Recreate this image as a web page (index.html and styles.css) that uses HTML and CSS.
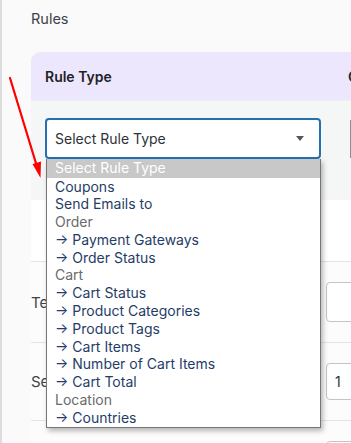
FILE: index.html
```html
<!DOCTYPE html>
<html>
<head>
<meta charset="utf-8">
<link rel="stylesheet" href="styles.css">
</head>
<body>
<div class="page">
  <h2 class="title">Rules</h2>
  <div class="card">
    <div class="card-head">
      <div class="col1">Rule Type</div>
      <div class="col2">Conditions</div>
    </div>
    <div class="card-body">
      <div class="col1">
        <div class="select">
          <span>Select Rule Type</span>
          <span class="caret"></span>
        </div>
      </div>
      <div class="col2">
        <div class="select2"></div>
      </div>
    </div>
    <div class="card-foot"></div>
  </div>
  <div class="rows">
    <div class="row r1">
      <span class="label">Test Mode</span>
      <div class="input"></div>
    </div>
    <div class="row r2">
      <span class="label">Sequence</span>
      <div class="input small">1</div>
    </div>
    <div class="row r3">
      <div class="input"></div>
    </div>
  </div>

  <ul class="dropdown">
    <li class="opt sel">Select Rule Type</li>
    <li class="opt">Coupons</li>
    <li class="opt">Send Emails to</li>
    <li class="grp">Order</li>
    <li class="opt">→ Payment Gateways</li>
    <li class="opt">→ Order Status</li>
    <li class="grp">Cart</li>
    <li class="opt">→ Cart Status</li>
    <li class="opt">→ Product Categories</li>
    <li class="opt">→ Product Tags</li>
    <li class="opt">→ Cart Items</li>
    <li class="opt">→ Number of Cart Items</li>
    <li class="opt">→ Cart Total</li>
    <li class="grp">Location</li>
    <li class="opt">→ Countries</li>
  </ul>

  <svg class="pointer" width="351" height="443" viewBox="0 0 351 443">
    <line x1="10" y1="78" x2="36.5" y2="165" stroke="#ff0000" stroke-width="2.2" stroke-linecap="round"/>
    <polygon points="40.5,178 32.5,164 41,161.5" fill="#ff0000"/>
  </svg>
</div>
</body>
</html>
```

FILE: styles.css
```css
html, body {
  margin: 0;
  padding: 0;
}
body {
  width: 351px;
  height: 443px;
  overflow: hidden;
  background: #fafafa;
  font-family: Inter, "Noto Sans", sans-serif;
  color: #1d2327;
}
.page {
  position: relative;
  height: 443px;
  overflow: hidden;
  border-left: 2px solid #dcdcde;
  padding-left: 29px;
  box-sizing: border-box;
}
.title {
  margin: 0;
  padding-top: 10px;
  height: 52px;
  box-sizing: border-box;
  font-size: 14.5px;
  font-weight: 400;
  line-height: 18px;
  color: #3c434a;
}
.card {
  width: 400px;
}
.card-head {
  display: grid;
  grid-template-columns: 317px 1fr;
  height: 48px;
  align-items: center;
  background: #ede7fd;
  border-top-left-radius: 9px;
  font-size: 14px;
  font-weight: 600;
  color: #1d2327;
}
.card-head .col1 {
  padding-left: 14px;
}
.card-body {
  display: grid;
  grid-template-columns: 317px 1fr;
  height: 100px;
  background: #f5f6f6;
  border-top: 1px solid #eeeff0;
  box-sizing: border-box;
}
.card-body .col1 {
  padding: 17px 0 0 14px;
}
.select {
  width: 276px;
  height: 41px;
  box-sizing: border-box;
  border: 2px solid #2271b1;
  border-radius: 4px;
  background: #fff;
  display: flex;
  align-items: center;
  justify-content: space-between;
  padding: 0 15px 0 8px;
  font-size: 14px;
  color: #2c3338;
}
.caret {
  width: 0;
  height: 0;
  border-left: 4.5px solid transparent;
  border-right: 4.5px solid transparent;
  border-top: 5px solid #50575e;
}
.card-body .col2 {
  padding-top: 19px;
}
.select2 {
  margin-left: 2px;
  width: 60px;
  height: 38px;
  box-sizing: border-box;
  border-left: 2px solid #8c8f94;
}
.card-foot {
  height: 61px;
  background: #ffffff;
  border-bottom: 1px solid #e4e4e4;
}
.row {
  display: flex;
  align-items: center;
  justify-content: space-between;
  border-bottom: 1px solid #e4e4e4;
  background: #fcfcfc;
  box-sizing: border-box;
  width: 400px;
}
.r1 { height: 81px; }
.r2 { height: 78px; }
.r3 { height: 60px; align-items: flex-start; justify-content: flex-end; padding-top: 20px; }
.label {
  font-size: 15px;
  color: #3c434a;
}
.input {
  width: 100px;
  height: 40px;
  margin-right: 5px;
  box-sizing: border-box;
  border: 1px solid #c3c4c7;
  border-radius: 4px;
  background: #fff;
  font-size: 14px;
  color: #2c3338;
  padding-left: 8px;
  display: flex;
  align-items: center;
}
.input.small {
  height: 37px;
}
.dropdown {
  position: absolute;
  left: 44px;
  top: 159px;
  width: 273px;
  margin: 0;
  padding: 0;
  list-style: none;
  background: #fff;
  border: 1px solid #767676;
  border-top: 0;
  box-shadow: 2px 3px 5px rgba(0, 0, 0, 0.28);
  font-size: 14px;
}
.dropdown li {
  height: 17.8px;
  line-height: 17.8px;
  padding-left: 8px;
  white-space: nowrap;
}
.dropdown .opt {
  color: #1f3d66;
}
.dropdown .grp {
  color: #6a6a6a;
}
.dropdown .sel {
  background: #c8c8c8;
  color: #ffffff;
  height: 18.5px;
  line-height: 18.5px;
}
.pointer {
  position: absolute;
  left: -2px;
  top: 0;
  pointer-events: none;
}
```
